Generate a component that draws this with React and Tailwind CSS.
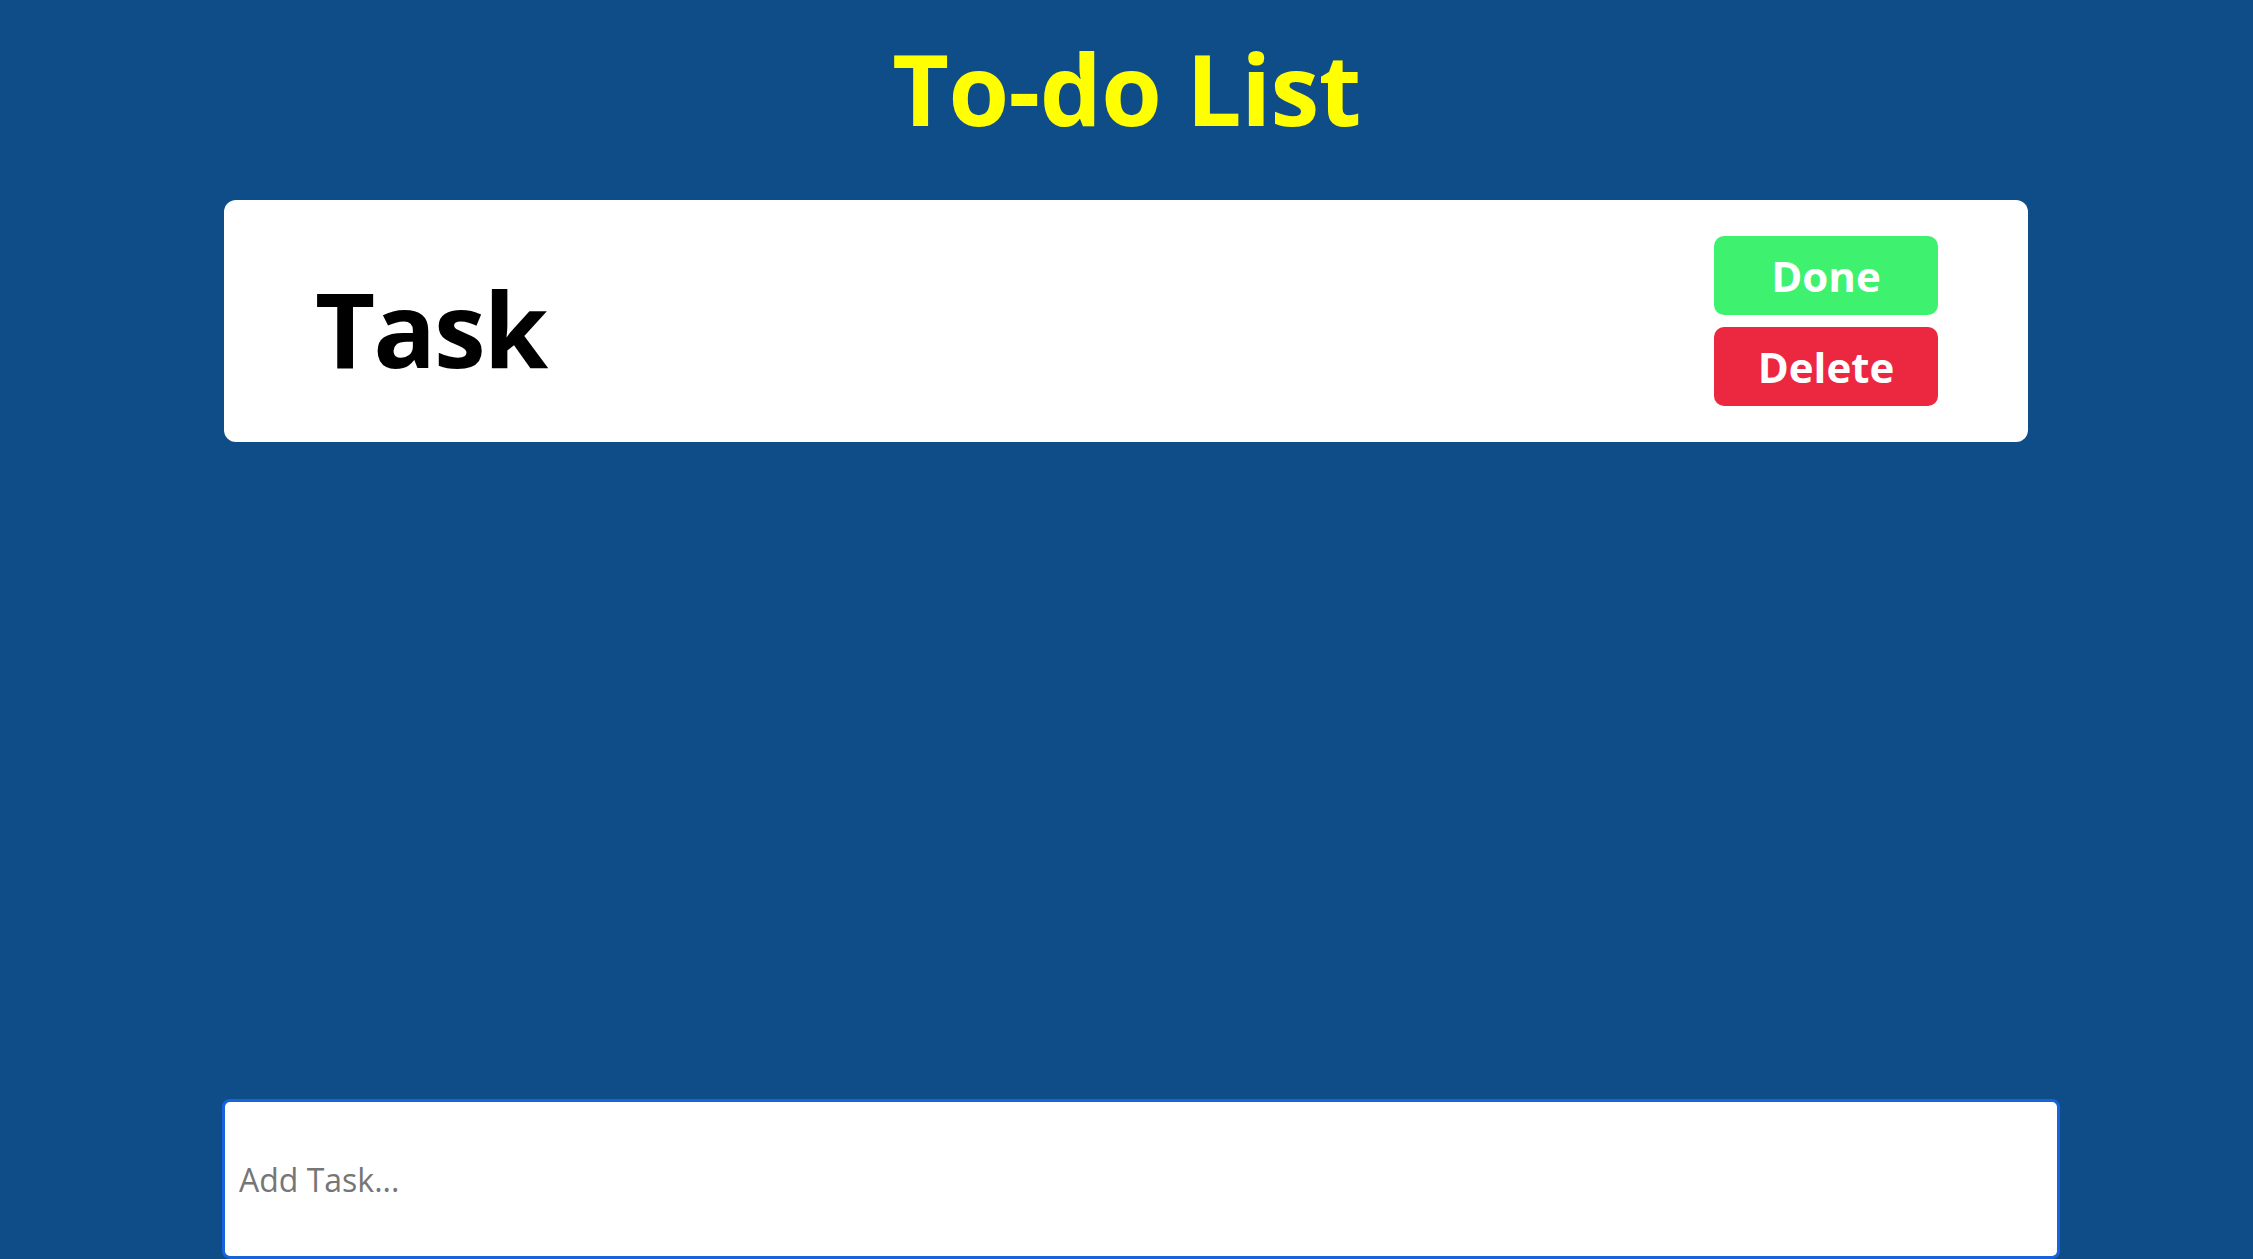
import React, { useState } from 'react';

export default function App(){
  const [tasks, setTasks] = useState([{ id: 1, text: 'Task', done: false }]);
  const [value, setValue] = useState('');

  const addTask = e => {
    if (e.key !== 'Enter' || !value.trim()) return;
    setTasks([...tasks, { id: Date.now(), text: value.trim(), done: false }]);
    setValue('');
  };

  return (
    <div className="h-[1259px] overflow-hidden bg-[#0f4d89] font-['Open_Sans','Noto_Sans',sans-serif]">
      <h1 className="pt-[44px] text-center text-[98px] leading-[100px] font-bold text-[#ffff00] tracking-[-0.5px]">To-do List</h1>

      <div className="pl-[224px] pt-[62px]">
        <div className="h-[899px] space-y-4">
          {tasks.map(t => (
            <div key={t.id} className="w-[1804px] h-[242px] rounded-xl bg-white flex items-center justify-between pl-[91px] pr-[90px]">
              <div className={`text-[104px] font-bold text-black leading-none tracking-[-2px] pt-[14px] ${t.done ? 'line-through' : ''}`}>{t.text}</div>
              <div className="flex flex-col gap-[12px]">
                <button
                  className="w-[224px] h-[79px] rounded-[10px] bg-[#3ef270] text-white text-[42px] font-bold leading-none"
                  onClick={() => setTasks(tasks.map(x => x.id === t.id ? { ...x, done: !x.done } : x))}
                >Done</button>
                <button
                  className="w-[224px] h-[79px] rounded-[10px] bg-[#ec2740] text-white text-[42px] font-bold leading-none"
                  onClick={() => setTasks(tasks.filter(x => x.id !== t.id))}
                >Delete</button>
              </div>
            </div>
          ))}
        </div>

        <input
          autoFocus
          value={value}
          onChange={e => setValue(e.target.value)}
          onKeyDown={addTask}
          placeholder="Add Task..."
          className="-ml-[2px] block w-[1838px] h-[160px] rounded-lg border-[3px] border-[#1763dc] bg-white pl-[14px] text-[32px] text-black placeholder:text-[#767676] outline-none"
        />
      </div>
    </div>
  );
}
